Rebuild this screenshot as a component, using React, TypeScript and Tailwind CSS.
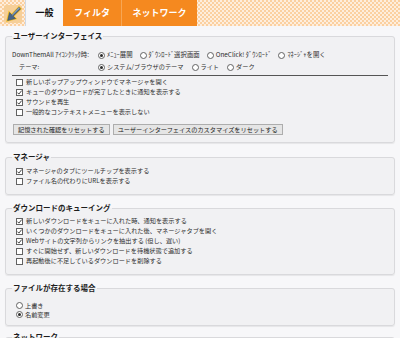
import React from 'react'

const FONT = "font-['Noto_Sans_CJK_JP','Noto_Sans',sans-serif]"

function Check({ checked }: { checked?: boolean }) {
  return (
    <span className="relative flex h-[7px] w-[7px] shrink-0 items-center justify-center border border-[#626262] bg-white">
      {checked && (
        <svg viewBox="0 0 7 7" className="absolute left-[-1px] top-[-1px] h-[7px] w-[7px]">
          <path d="M1.4 3.6 L2.9 5.1 L5.7 1.6" fill="none" stroke="#2b2b2b" strokeWidth="0.9" />
        </svg>
      )}
    </span>
  )
}

function Radio({ checked }: { checked?: boolean }) {
  return (
    <span className="flex h-[7px] w-[7px] shrink-0 items-center justify-center rounded-full border border-[#626262] bg-white">
      {checked && <span className="h-[3px] w-[3px] rounded-full bg-[#2b2b2b]" />}
    </span>
  )
}

function CheckRow({ label, checked }: { label: string; checked?: boolean }) {
  return (
    <div className="flex h-[10px] items-center gap-[3px] pl-[4px]">
      <Check checked={checked} />
      <span className="whitespace-nowrap">{label}</span>
    </div>
  )
}

function RadioItem({ label, checked }: { label: string; checked?: boolean }) {
  return (
    <div className="flex items-center gap-[2px]">
      <Radio checked={checked} />
      <span className="whitespace-nowrap">{label}</span>
    </div>
  )
}

function Section({
  title,
  className = '',
  children,
}: {
  title: string
  className?: string
  children?: React.ReactNode
}) {
  return (
    <fieldset
      className={`mx-[5px] rounded-[3px] border border-[#d9d9dc] bg-[#f1f1f3] px-[6px] shadow-[0_1px_1px_rgba(0,0,0,0.07)] ${className}`}
    >
      <legend className="px-[1px] text-[7.5px] font-bold leading-[10px] text-[#1e1e1e]">{title}</legend>
      {children}
    </fieldset>
  )
}

function Logo() {
  return (
    <svg viewBox="0 0 20 20" className="h-[20px] w-[20px]">
      <rect x="1" y="1" width="18" height="18" rx="2" fill="#f6cf98" />
      <path d="M16 1.8 L19 4.8 L11.6 12.2 L14.4 15 L3 18 L5.6 6.4 L8.6 9.4 Z" fill="#f4c030" />
      <path d="M15.9 3.3 L17.5 4.9 L10.2 12.2 L12.6 14.6 L4.6 16.5 L6.5 8.5 L8.9 10.9 Z" fill="#4a6585" stroke="#2f435c" strokeWidth="0.5" />
      <path d="M15.9 3.3 L16.8 4.2 L9.5 11.5 L8.9 10.9 Z" fill="#8aa3bf" />
    </svg>
  )
}

export default function App() {
  return (
    <div className={`${FONT} h-[338px] w-[400px] overflow-hidden bg-[#f7f7f9] text-[6.2px] leading-[10px] text-[#2e2e2e]`}>
      {/* Header */}
      <div className="flex h-[26px] items-stretch bg-[#fcdcb8] bg-[repeating-conic-gradient(#fbd0a0_0_25%,#feeedd_0_50%)] bg-[length:4px_4px]">
        <div className="flex w-[25px] items-center justify-center pt-[1px]">
          <Logo />
        </div>
        <div className="flex w-[38px] items-center justify-center border-l border-[#cfd9e6] bg-[#f7f7f9] text-[9px] font-bold text-[#111]">
          一般
        </div>
        <div className="flex w-[58px] items-center justify-center bg-[#f5891f] text-[9px] font-bold text-white">
          フィルタ
        </div>
        <div className="flex w-[76px] items-center justify-center border-l border-[#f7a653] bg-[#f5891f] text-[9px] font-bold text-white">
          ネットワーク
        </div>
      </div>

      {/* ユーザーインターフェイス */}
      <Section title="ユーザーインターフェイス" className="mt-[5px] pb-[7px]">
        <div className="mt-[9px] flex h-[10px] items-center">
          <span className="w-[86px] shrink-0 whitespace-nowrap text-[6.4px]">DownThemAll ｱｲｺﾝｸﾘｯｸ時:</span>
          <div className="flex items-center gap-[7px] text-[6.4px]">
            <RadioItem label="ﾒﾆｭｰ展開" checked />
            <RadioItem label="ﾀﾞｳﾝﾛｰﾄﾞ選択画面" />
            <RadioItem label="OneClick! ﾀﾞｳﾝﾛｰﾄﾞ" />
            <RadioItem label="ﾏﾈｰｼﾞｬを開く" />
          </div>
        </div>
        <div className="mt-[2px] flex h-[10px] items-center">
          <span className="w-[86px] shrink-0 pl-[7px]">テーマ:</span>
          <div className="flex items-center gap-[8px]">
            <RadioItem label="システム/ブラウザのテーマ" checked />
            <RadioItem label="ライト" />
            <RadioItem label="ダーク" />
          </div>
        </div>
        <div className="mt-[3px] border-b border-[#555]" />
        <div className="mt-[1px]">
          <CheckRow label="新しいポップアップウィンドウでマネージャを開く" />
          <CheckRow label="キューのダウンロードが完了したときに通知を表示する" checked />
          <CheckRow label="サウンドを再生" checked />
          <CheckRow label="一般的なコンテキストメニューを表示しない" />
        </div>
        <div className="mt-[7px] flex gap-[3px] pl-[1px]">
          <button className="h-[11px] border border-[#adadad] bg-[#e5e5e5] px-[4px] leading-[9px] text-[#222]">
            記憶された確認をリセットする
          </button>
          <button className="h-[11px] border border-[#adadad] bg-[#e5e5e5] px-[4px] leading-[9px] text-[#222]">
            ユーザーインターフェイスのカスタマイズをリセットする
          </button>
        </div>
      </Section>

      {/* マネージャ */}
      <Section title="マネージャ" className="mt-[9px] pb-[8px]">
        <div className="pt-[4px]">
          <CheckRow label="マネージャのタブにツールチップを表示する" checked />
          <CheckRow label="ファイル名の代わりにURLを表示する" />
        </div>
      </Section>

      {/* ダウンロードのキューイング */}
      <Section title="ダウンロードのキューイング" className="mt-[8px] pb-[8px]">
        <div className="pt-[3px]">
          <CheckRow label="新しいダウンロードをキューに入れた時、通知を表示する" checked />
          <CheckRow label="いくつかのダウンロードをキューに入れた後、マネージャタブを開く" checked />
          <CheckRow label="Webサイトの文字列からリンクを抽出する (但し、遅い)" checked />
          <CheckRow label="すぐに開始せず、新しいダウンロードを待機状態で追加する" />
          <CheckRow label="再起動後に不足しているダウンロードを削除する" />
        </div>
      </Section>

      {/* ファイルが存在する場合 */}
      <Section title="ファイルが存在する場合" className="mt-[8px] pb-[6px]">
        <div className="pl-[4px] pt-[8px]">
          <div className="flex h-[9px] items-center">
            <RadioItem label="上書き" />
          </div>
          <div className="flex h-[9px] items-center">
            <RadioItem label="名前変更" checked />
          </div>
        </div>
      </Section>

      <Section title="ネットワーク" className="mt-[6px] pb-[20px]">
        <div className="h-[20px]" />
      </Section>
    </div>
  )
}
